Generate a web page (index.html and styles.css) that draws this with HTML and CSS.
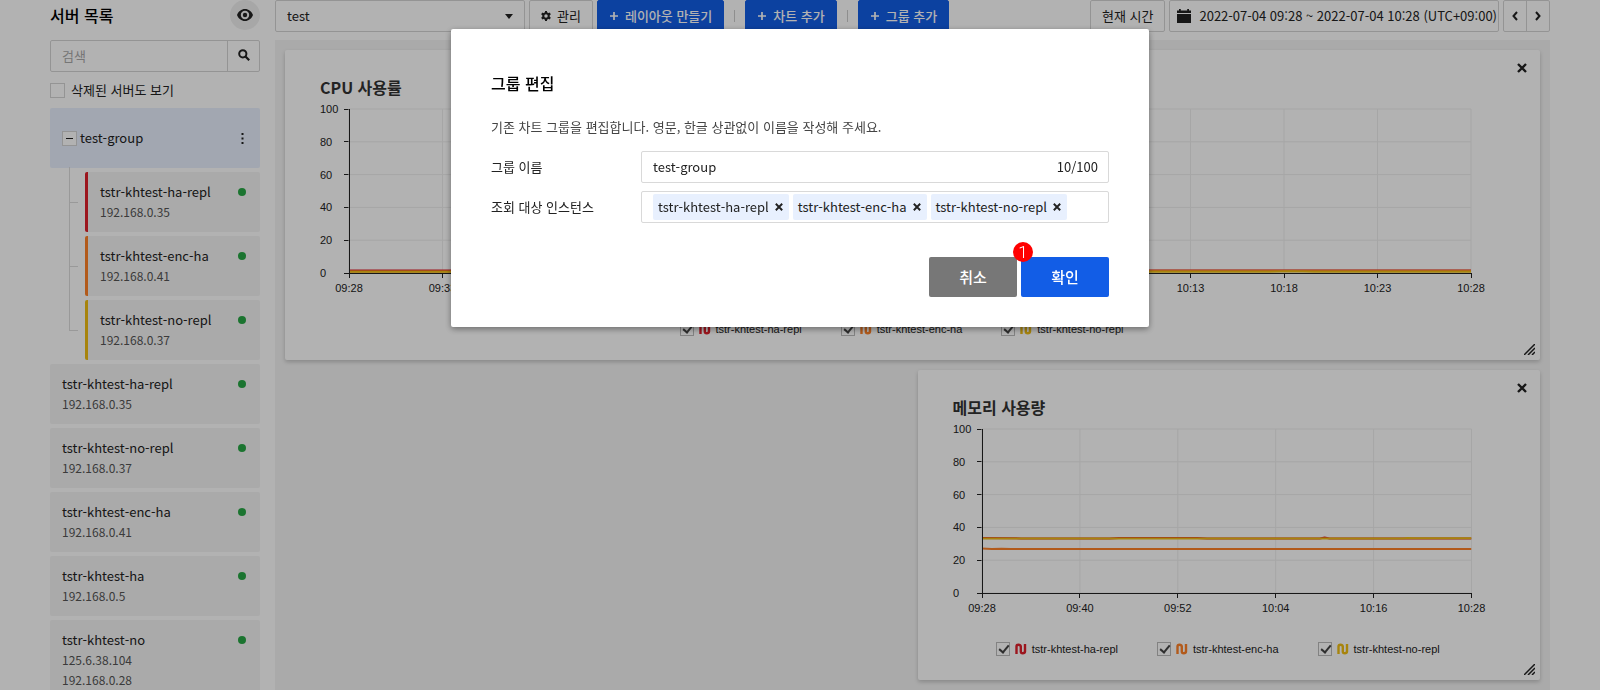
FILE: index.html
```
<!doctype html>
<html lang="ko">
<head>
<meta charset="utf-8">
<title>서버 목록</title>
<link rel="stylesheet" href="styles.css">
</head>
<body>

<svg class="defs" aria-hidden="true">
  <symbol id="i-x" viewBox="0 0 10 10"><path d="M1 1l8 8M9 1l-8 8" fill="none" stroke="currentColor" stroke-width="2.4"/></symbol>
  <symbol id="i-plus" viewBox="0 0 10 10"><path d="M5 1v8M1 5h8" fill="none" stroke="currentColor" stroke-width="1.7"/></symbol>
  <symbol id="i-wave" viewBox="0 0 12 12"><path d="M1.5 11V3.500Q1.500 1.800 3.500 1.800T5.800 3.500V8.500Q5.800 10.200 7.800 10.200T10 8.500V1" fill="none" stroke="currentColor" stroke-width="2.4"/></symbol>
  <symbol id="i-grip" viewBox="0 0 11 11"><path d="M0 11L11 0M4 11l7-7M8 11l3-3" fill="none" stroke="currentColor" stroke-width="1.5"/></symbol>
</svg>

<div class="page">
  <aside class="sidebar">
    <div class="side-head">
      <h1>서버 목록</h1>
      <button class="eye" type="button" aria-label="보기">
        <svg width="16" height="12" viewBox="0 0 16 12"><path fill-rule="evenodd" d="M8 0C4.400 0 1.300 2.500 0 6c1.300 3.500 4.400 6 8 6s6.700-2.500 8-6c-1.300-3.500-4.400-6-8-6zm0 10.200A4.200 4.200 0 1 1 8 1.800a4.200 4.200 0 0 1 0 8.400z"/><circle cx="8" cy="6" r="2.200"/></svg>
      </button>
    </div>
    <form class="search">
      <input type="text" placeholder="검색" aria-label="검색">
      <button type="button" aria-label="검색">
        <svg width="12" height="12" viewBox="0 0 12 12"><circle cx="4.800" cy="4.800" r="3.600" fill="none" stroke="currentColor" stroke-width="2"/><path d="M7.500 7.500l3.700 3.700" stroke="currentColor" stroke-width="2.200"/></svg>
      </button>
    </form>
    <label class="deleted"><input type="checkbox"> 삭제된 서버도 보기</label>

    <div class="group">
      <button class="fold" type="button" aria-label="접기"></button>
      <span class="group-name">test-group</span>
      <button class="more" type="button" aria-label="더 보기"><svg width="3" height="11" viewBox="0 0 3 11"><path d="M.5 0h2v2h-2zM.5 4.500h2v2h-2zM.5 9h2v2h-2z"/></svg></button>
    </div>
    <ul class="servers tree">
      <li class="red"><b>tstr-khtest-ha-repl</b><span>192.168.0.35</span></li>
      <li class="orange"><b>tstr-khtest-enc-ha</b><span>192.168.0.41</span></li>
      <li class="yellow"><b>tstr-khtest-no-repl</b><span>192.168.0.37</span></li>
    </ul>
    <ul class="servers">
      <li><b>tstr-khtest-ha-repl</b><span>192.168.0.35</span></li>
      <li><b>tstr-khtest-no-repl</b><span>192.168.0.37</span></li>
      <li><b>tstr-khtest-enc-ha</b><span>192.168.0.41</span></li>
      <li><b>tstr-khtest-ha</b><span>192.168.0.5</span></li>
      <li><b>tstr-khtest-no</b><span>125.6.38.104</span><span>192.168.0.28</span></li>
    </ul>
  </aside>

  <main class="main">
    <div class="toolbar">
      <div class="layout-select">
        <select aria-label="레이아웃"><option>test</option></select>
      </div>
      <button class="btn" type="button">
        <svg width="12" height="12" viewBox="0 0 12 12"><circle cx="6" cy="6" r="3.300" fill="none" stroke="currentColor" stroke-width="2.400"/><path d="M6 0v2.500M6 9.500V12M.8 3l2.200 1.200M9 7.800L11.200 9M.8 9L3 7.800M9 4.200L11.200 3" stroke="currentColor" stroke-width="2.400"/></svg>
        관리
      </button>
      <button class="btn primary" type="button"><svg width="10" height="10"><use href="#i-plus"/></svg>레이아웃 만들기</button>
      <i class="sep"></i>
      <button class="btn primary" type="button"><svg width="10" height="10"><use href="#i-plus"/></svg>차트 추가</button>
      <i class="sep"></i>
      <button class="btn primary" type="button"><svg width="10" height="10"><use href="#i-plus"/></svg>그룹 추가</button>
      <div class="period">
        <button class="btn now" type="button">현재 시간</button>
        <button class="btn date" type="button">
          <svg width="14" height="14" viewBox="0 0 14 14"><path d="M0 5h14v9H0zM0 1.500h2V0h1.800v1.500h6.400V0H12v1.500h2V4H0z"/></svg>
          2022-07-04 09:28 ~ 2022-07-04 10:28 (UTC+09:00)
        </button>
        <div class="pager">
          <button type="button" aria-label="이전"><svg width="6" height="10" viewBox="0 0 6 10"><path d="M5 1L1.500 5 5 9"/></svg></button>
          <button type="button" aria-label="다음"><svg width="6" height="10" viewBox="0 0 6 10"><path d="M1 1l3.500 4L1 9"/></svg></button>
        </div>
      </div>
    </div>

    <div class="board">
      <section class="card wide">
        <h2>CPU 사용률</h2>
        <button class="close" type="button" aria-label="닫기"><svg width="10" height="10"><use href="#i-x"/></svg></button>
        <div class="chart" id="cpu"></div>
        <div class="legend">
          <label><input type="checkbox" checked><svg class="c-red" width="12" height="12"><use href="#i-wave"/></svg>tstr-khtest-ha-repl</label>
          <label><input type="checkbox" checked><svg class="c-orange" width="12" height="12"><use href="#i-wave"/></svg>tstr-khtest-enc-ha</label>
          <label><input type="checkbox" checked><svg class="c-yellow" width="12" height="12"><use href="#i-wave"/></svg>tstr-khtest-no-repl</label>
        </div>
        <svg class="grip" width="11" height="11"><use href="#i-grip"/></svg>
      </section>

      <section class="card right">
        <h2>메모리 사용량</h2>
        <button class="close" type="button" aria-label="닫기"><svg width="10" height="10"><use href="#i-x"/></svg></button>
        <div class="chart" id="memory"></div>
        <div class="legend">
          <label><input type="checkbox" checked><svg class="c-red" width="12" height="12"><use href="#i-wave"/></svg>tstr-khtest-ha-repl</label>
          <label><input type="checkbox" checked><svg class="c-orange" width="12" height="12"><use href="#i-wave"/></svg>tstr-khtest-enc-ha</label>
          <label><input type="checkbox" checked><svg class="c-yellow" width="12" height="12"><use href="#i-wave"/></svg>tstr-khtest-no-repl</label>
        </div>
        <svg class="grip" width="11" height="11"><use href="#i-grip"/></svg>
      </section>
    </div>
  </main>
</div>

<div class="mask">
  <form class="modal" role="dialog" aria-labelledby="modal-title">
    <h2 id="modal-title">그룹 편집</h2>
    <p>기존 차트 그룹을 편집합니다. 영문, 한글 상관없이 이름을 작성해 주세요.</p>
    <div class="row">
      <label for="group-name">그룹 이름</label>
      <div class="field">
        <input id="group-name" type="text" value="test-group" maxlength="100">
        <span>10/100</span>
      </div>
    </div>
    <div class="row">
      <label for="targets">조회 대상 인스턴스</label>
      <div class="field tags">
        <span class="tag">tstr-khtest-ha-repl<button type="button" aria-label="삭제"><svg width="8" height="8"><use href="#i-x"/></svg></button></span>
        <span class="tag">tstr-khtest-enc-ha<button type="button" aria-label="삭제"><svg width="8" height="8"><use href="#i-x"/></svg></button></span>
        <span class="tag">tstr-khtest-no-repl<button type="button" aria-label="삭제"><svg width="8" height="8"><use href="#i-x"/></svg></button></span>
        <input id="targets" type="text">
      </div>
    </div>
    <div class="actions">
      <button class="cancel" type="button">취소</button>
      <button class="ok" type="button">확인<span class="badge">1</span></button>
    </div>
  </form>
</div>

<script>

function drawChart(id, times, series) {
  let sb = '<svg class="plot">', n = times.length - 1
  for (let v = 0; v <= 100; v += 20) {
    let y = (100 - v) + '%'
    sb += '<line class="grid" x1="0" x2="100%" y1="' + y + '" y2="' + y + '"/>'
    sb += '<svg y="' + y + '" overflow="visible"><path class="axis" d="M-5 0H0"/><text x="-29" y="4">' + v + '</text></svg>'
  }
  times.forEach(function (t, i) {
    let x = (i / n * 100) + '%'
    sb += '<line class="grid" x1="' + x + '" x2="' + x + '" y1="0" y2="100%"/>'
    sb += '<svg x="' + x + '" y="100%" overflow="visible"><path class="axis" d="M0 0V5"/><text class="time" y="19">' + t + '</text></svg>'
  })
  // values are drawn on a 0-100 canvas that is stretched over the plot
  sb += '<svg width="100%" height="100%" viewBox="0 0 100 100" preserveAspectRatio="none">'
  series.forEach(function (s) {
    let pts = s.data.map(function (p) { return p[0] + ',' + (100 - p[1]) }).join(' ')
    sb += '<polyline class="serie c-' + s.color + '" points="' + pts + '"/>'
  })
  sb += '</svg>'
  sb += '<line class="axis" x1="0" x2="0" y1="0" y2="100%"/><line class="axis" x1="0" x2="100%" y1="100%" y2="100%"/></svg>'
  document.getElementById(id).innerHTML = sb
}

drawChart('cpu',
  ['09:28', '09:33', '09:38', '09:43', '09:48', '09:53', '09:58', '10:03', '10:08', '10:13', '10:18', '10:23', '10:28'],
  [
    { color: 'red', data: [[0, 1.5], [100, 1.5]] },
    { color: 'orange', data: [[0, 0.9], [60, 0.9], [70, 1.3], [100, 1.3]] },
    { color: 'yellow', data: [[0, 0.7], [82, 0.7], [84, 1], [86, 0.7], [100, 0.7]] }
  ])

drawChart('memory', ['09:28', '09:40', '09:52', '10:04', '10:16', '10:28'], [
  { color: 'red', data: [[0, 33.6], [8, 33.3], [26, 33.3], [28, 33.6], [44, 33.6], [46, 33.3], [69, 33.3], [70, 33.8], [71, 33.3], [100, 33.3]] },
  { color: 'orange', data: [[0, 27.2], [2, 26.8], [4, 27], [6, 26.8], [100, 26.8]] },
  { color: 'yellow', data: [[0, 33.2], [86, 33.2], [87, 33.6], [88, 33.4], [100, 33.4]] }
])

</script>
</body>
</html>
```

FILE: styles.css
```
* {
  box-sizing: border-box;
}
body, h1, h2, p, ul {
  margin: 0;
  padding: 0;
}
body {
  height: 100vh;
  overflow: hidden;
  background: #fff;
  color: #222;
  font: 13px/20px "Noto Sans CJK KR", sans-serif;
}
button, input, select {
  margin: 0;
  padding: 0;
  border: 0;
  background: none;
  color: inherit;
  font: inherit;
}
svg {
  flex: none;
  fill: currentColor;
}
.defs {
  position: absolute;
  width: 0;
  height: 0;
}
.page {
  display: flex;
  gap: 15px;
  height: 100%;
  padding: 0 50px;
}
.c-red { color: #e0202b; }
.c-orange { color: #ff8228; }
.c-yellow { color: #f0be14; }

/* sidebar */
.sidebar {
  flex: none;
  width: 210px;
}
.side-head {
  display: flex;
  align-items: center;
  justify-content: space-between;
  height: 30px;
  margin-bottom: 10px;
}
.side-head h1 {
  color: #000;
  font-size: 16px;
  font-weight: 500;
}
.eye {
  display: flex;
  align-items: center;
  justify-content: center;
  width: 30px;
  height: 30px;
  border-radius: 50%;
  background: #f0f0f0;
}
.search {
  display: flex;
  height: 32px;
  border: 1px solid #d5d5d5;
  border-radius: 2px;
}
.search input {
  flex: 1;
  min-width: 0;
  padding: 0 11px;
}
.search input::placeholder {
  color: #aaa;
}
.search button {
  width: 32px;
  border-left: 1px solid #d5d5d5;
}
.deleted {
  display: flex;
  align-items: center;
  gap: 6px;
  height: 36px;
}
.deleted input {
  appearance: none;
  width: 15px;
  height: 15px;
  border: 1px solid #d5d5d5;
}
.group {
  display: flex;
  align-items: center;
  height: 60px;
  padding: 0 16px 0 12px;
  border-radius: 2px;
  background: #e8f0fe;
}
.fold {
  display: flex;
  align-items: center;
  justify-content: center;
  width: 15px;
  height: 15px;
  margin-right: 3px;
  border: 1px solid #d5d5d5;
  background: #fff;
}
.fold::before {
  content: "";
  width: 7px;
  height: 1px;
  background: #222;
}
.more {
  display: flex;
  margin-left: auto;
}
.servers {
  display: flex;
  flex-direction: column;
  gap: 4px;
  padding-top: 4px;
  list-style: none;
}
.servers li {
  position: relative;
  padding: 10px 12px;
  border-radius: 2px;
  background: #f4f4f4;
}
.servers b, .servers span {
  display: block;
  font-weight: normal;
}
.servers span {
  color: #555;
  font-size: 12px;
}
.servers li::after {
  content: "";
  position: absolute;
  top: 16px;
  right: 14px;
  width: 8px;
  height: 8px;
  border-radius: 50%;
  background: #28a745;
}
.tree {
  padding-left: 35px;
}
.tree li {
  border-left: 3px solid;
}
.tree .red { border-color: #e0202b; }
.tree .orange { border-color: #ff8228; }
.tree .yellow { border-color: #f0be14; }
.tree li::before {
  content: "";
  position: absolute;
  left: -19px;
  bottom: 29px;
  width: 8px;
  height: 64px;
  border: solid #dcdcdc;
  border-width: 0 0 1px 1px;
}
.tree li:first-child::before {
  height: 35px;
}

/* toolbar */
.main {
  flex: 1;
  display: flex;
  flex-direction: column;
  min-width: 0;
}
.toolbar {
  display: flex;
  align-items: center;
  gap: 4px;
  height: 32px;
  margin-bottom: 8px;
  white-space: nowrap;
}
.layout-select {
  position: relative;
  width: 250px;
}
.layout-select select {
  appearance: none;
  width: 100%;
  height: 32px;
  padding: 0 11px;
  border: 1px solid #d5d5d5;
  border-radius: 2px;
}
.layout-select::after {
  content: "";
  position: absolute;
  top: 14px;
  right: 12px;
  border: 4px solid transparent;
  border-top: 5px solid #222;
  border-bottom: 0;
}
.btn {
  display: flex;
  align-items: center;
  gap: 6px;
  height: 32px;
  padding: 0 11px;
  border: 1px solid #d5d5d5;
  border-radius: 2px;
}
.btn:not(.date) svg {
  width: 10px;
}
.primary {
  border-color: #125de6;
  background: #125de6;
  color: #fff;
  font-weight: 500;
}
.sep {
  width: 1px;
  height: 12px;
  margin: 0 6px;
  background: #ccc;
}
.period {
  display: flex;
  gap: 4px;
  margin-left: auto;
}
.date {
  gap: 8px;
  padding: 0 1px 0 7px;
}
.pager {
  display: flex;
  border: 1px solid #d5d5d5;
  border-radius: 2px;
}
.pager button {
  width: 22px;
}
.pager button + button {
  width: 23px;
  border-left: 1px solid #d5d5d5;
}
.pager path {
  fill: none;
  stroke: #222;
  stroke-width: 2;
}

/* charts */
.board {
  flex: 1;
  display: grid;
  grid-template-columns: 1fr 1fr;
  align-content: start;
  gap: 10px;
  padding: 10px;
  background: #f4f4f4;
}
.card {
  position: relative;
  height: 310px;
  padding: 25px 35px 0;
  border-radius: 2px;
  background: #fff;
  box-shadow: 0 2px 4px rgba(0, 0, 0, .2);
}
.card h2 {
  height: 34px;
  color: #333;
  font-size: 16px;
  font-weight: 700;
  line-height: 24px;
}
.wide {
  grid-column: 1 / -1;
}
.right {
  grid-column: 2;
}
.close {
  position: absolute;
  top: 13px;
  right: 13px;
  display: flex;
}
.grip {
  position: absolute;
  right: 5px;
  bottom: 5px;
}
.chart {
  height: 164px;
  margin: 0 34px 0 29px;
}
.plot {
  display: block;
  width: 100%;
  height: 100%;
  overflow: visible;
  fill: #222;
  font: 11px "Liberation Sans", Arial, sans-serif;
}
.grid {
  stroke: #eee;
}
.axis {
  stroke: #222;
  shape-rendering: crispEdges;
}
.time {
  text-anchor: middle;
}
.serie {
  fill: none;
  stroke: currentColor;
  stroke-width: 2;
  vector-effect: non-scaling-stroke;
}
.legend {
  display: flex;
  justify-content: center;
  gap: 39px;
  margin-top: 46px;
  padding-right: 22px;
  font: 11px/20px "Liberation Sans", Arial, sans-serif;
}
.legend label {
  display: flex;
  align-items: center;
  gap: 5px;
}
.legend input {
  appearance: none;
  width: 14px;
  height: 14px;
  border: 1px solid #bbb;
}
.legend input:checked::before {
  content: "";
  display: block;
  width: 4px;
  height: 8px;
  margin: 0 4px;
  border: solid #444;
  border-width: 0 2px 2px 0;
  transform: rotate(40deg);
}

/* modal */
.mask {
  position: fixed;
  inset: 0;
  background: rgba(0, 0, 0, .3);
}
.modal {
  width: 698px;
  max-width: 100%;
  margin: 29px auto 0;
  padding: 42px 40px 30px;
  border-radius: 2px;
  background: #fff;
  box-shadow: 0 2px 6px rgba(0, 0, 0, .4);
}
.modal h2 {
  margin-bottom: 22px;
  color: #000;
  font-size: 16px;
  font-weight: 500;
  line-height: 24px;
}
.modal p {
  margin-bottom: 14px;
  color: #444;
}
.row {
  display: flex;
  align-items: center;
  margin-bottom: 8px;
}
.row label {
  width: 150px;
}
.field {
  flex: 1;
  display: flex;
  align-items: center;
  gap: 4px;
  height: 32px;
  padding: 0 10px 0 11px;
  border: 1px solid #d9d9d9;
  border-radius: 2px;
}
.field input {
  flex: 1;
  min-width: 0;
}
.tag {
  display: flex;
  align-items: center;
  gap: 6px;
  height: 26px;
  padding: 0 6px 0 5px;
  border-radius: 2px;
  background: #e8f0fe;
}
.tag button {
  display: flex;
}
.actions {
  display: flex;
  justify-content: flex-end;
  gap: 4px;
  margin-top: 34px;
}
.actions button {
  position: relative;
  width: 88px;
  height: 40px;
  border-radius: 2px;
  color: #fff;
  font-size: 15px;
  font-weight: 500;
}
.cancel {
  background: #777;
}
.ok {
  background: #125de6;
}
.badge {
  position: absolute;
  top: -15px;
  left: -8px;
  width: 20px;
  height: 20px;
  border-radius: 50%;
  background: #f00;
  font: 300 17px/20px Roboto, sans-serif;
}
```
